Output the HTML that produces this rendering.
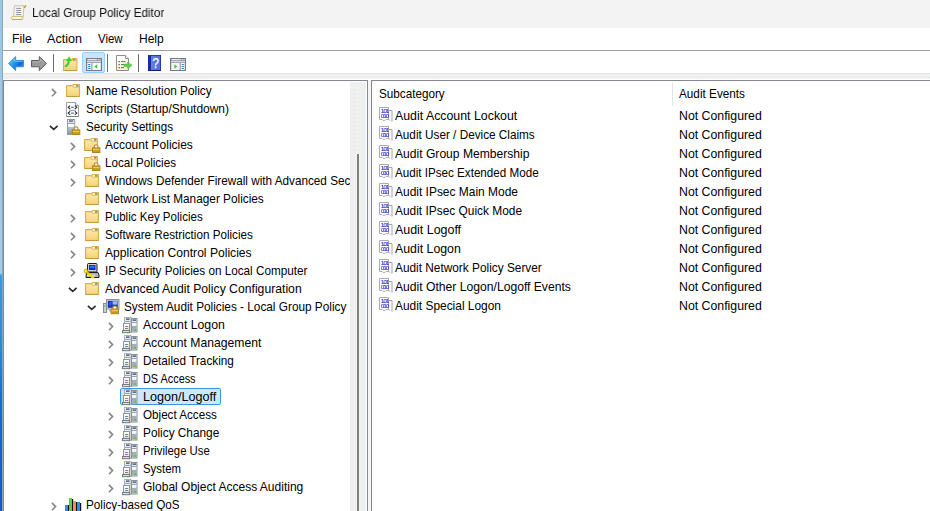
<!DOCTYPE html>
<html lang="en"><head><meta charset="utf-8"><title>Local Group Policy Editor</title>
<style>
html,body{margin:0;padding:0}
body{width:930px;height:511px;overflow:hidden;background:#fff;position:relative;
 font-family:"Liberation Sans",sans-serif;font-size:12.4px;color:#000}
.ic{position:absolute;overflow:visible}
.t{position:absolute;white-space:nowrap;line-height:18px;height:18px;transform-origin:0 50%}
.tt{color:#111;will-change:transform}
.clip{position:absolute;height:18px;overflow:hidden}
.edge{position:absolute;left:0;top:0;width:4px;height:511px;
 background:linear-gradient(to right,rgba(0,0,0,0) 0,rgba(0,0,0,0) 2px,#8aa6ba 2px,#8aa6ba 3px,#fff 3px),
 linear-gradient(to bottom,#9ec6e3 0,#a2cbe6 273px,#6cbcf0 274px,#2f9fe2 276px,#2a8cde 340px,#1e68d8 400px,#1c54cc 511px);}
.titlebar{position:absolute;left:3px;top:0;width:927px;height:28px;background:#f3f3f3}
.menubar{position:absolute;left:3px;top:28px;width:927px;height:22px;background:#fff}
.menuline{position:absolute;left:3px;top:50px;width:927px;height:1px;background:#a0a0a0}
.sep{position:absolute;top:54px;width:1px;height:18px;background:#6d6d6d}
.tbsel{position:absolute;left:82px;top:52px;width:21px;height:19px;border:1px solid #98d1ff;background:#cce4f7;border-radius:2px}
.band{position:absolute;left:3px;top:73px;width:927px;height:6px;background:#f0f0f0 radial-gradient(circle at 0.5px 0.5px,#dde7eb 0.55px,rgba(221,231,235,0) 0.8px) 2px 3px/4px 8px;border-top:1px solid #e2e2e2;box-sizing:border-box}
.bandline{position:absolute;left:3px;top:80px;width:365px;height:1px;background:#828790}
.bandline2{position:absolute;left:371px;top:80px;width:559px;height:1px;background:#828790}
.gap{position:absolute;left:368px;top:80px;width:3px;height:431px;background:#f5f5f5}
.treeborder{position:absolute;left:3px;top:80px;width:1px;height:431px;background:#828790}
.treeright{position:absolute;left:367px;top:81px;width:1px;height:430px;background:#828790}
.listleft{position:absolute;left:371px;top:81px;width:1px;height:430px;background:#828790}
.sbtrack{position:absolute;left:350px;top:82px;width:16px;height:429px;background-color:#f0f0f0;background-image:radial-gradient(circle at 0.5px 0.5px,#dde7eb 0.55px,rgba(221,231,235,0) 0.8px),radial-gradient(circle at 0.5px 0.5px,#dde7eb 0.55px,rgba(221,231,235,0) 0.8px);background-size:4px 8px,4px 8px;background-position:0 3px,1px 7px}
.sbthumb{position:absolute;left:357px;top:154px;width:2px;height:357px;background:#808080;box-shadow:0 0 0 1px rgba(255,255,255,.35)}
.selbox{position:absolute;width:99px;height:15px;border:1px solid #3a96e6;background:#cce8ff;border-radius:2px}
.colsep{position:absolute;left:672px;top:82px;width:1px;height:24px;background:#e2e5e9}
</style></head>
<body>
<svg width="0" height="0" style="position:absolute;left:0;top:0"><defs><linearGradient id="gb" x1="0" y1="0" x2="1" y2="0.6"><stop offset="0" stop-color="#5fb8f2"/><stop offset=".45" stop-color="#2f9cea"/><stop offset=".8" stop-color="#0a6ade"/><stop offset="1" stop-color="#2a8ee6"/></linearGradient><linearGradient id="ug" x1="0" y1="0" x2="0" y2="1"><stop offset="0" stop-color="#fbe6a2"/><stop offset="1" stop-color="#f3d27c"/></linearGradient><linearGradient id="eg" x1="0" y1="0" x2="0" y2="1"><stop offset="0" stop-color="#ffffff"/><stop offset="1" stop-color="#fcefc0"/></linearGradient><linearGradient id="fg" x1="0" y1="0" x2="0" y2="1"><stop offset="0" stop-color="#fce9a6"/><stop offset="1" stop-color="#f4d27a"/></linearGradient><linearGradient id="sg" x1="0" y1="0" x2="0" y2="1"><stop offset="0" stop-color="#b9c4cf"/><stop offset="1" stop-color="#8796a6"/></linearGradient><linearGradient id="dg" x1="0" y1="0" x2="0" y2="1"><stop offset="0" stop-color="#ffffff"/><stop offset="1" stop-color="#fbe59a"/></linearGradient></defs></svg>
<div class="edge"></div>
<div class="titlebar"></div>
<svg class="ic" style="left:10.5px;top:4.5px" width="16" height="16" viewBox="0 0 16 16" ><path d="M3.4 0.8h9.6l-0.9 11H2.6z" fill="#fdf7dc" stroke="#b4b4b8" stroke-width=".8"/><path d="M13.2 2.8L15 0.6" stroke="#c89a20" stroke-width="1.6"/><path d="M5.2 3.4h5M5.2 5.5h5M5.2 7.5h5M5.2 9.6h5" stroke="#8c90a4" stroke-width="1"/><rect x="0.4" y="11.4" width="11.6" height="3" rx="1.5" fill="#fff6d0" stroke="#d2b050" stroke-width=".8"/><rect x="1.6" y="12.3" width="7.6" height="1" fill="#fff"/><path d="M1 14.6h10.4" stroke="#8c94a4" stroke-width=".6"/></svg>
<div class="menubar"></div>
<div class="menuline"></div>
<svg class="ic" style="left:8px;top:56px" width="16" height="15" viewBox="0 0 16 15" ><path d="M0.5 7.5L7.7 0.6V4.5H15.5V10.8H7.7V14.5z" fill="url(#gb)" stroke="#2a90e2" stroke-width=".9"/><path d="M2.2 7.5L6.8 3V5.5H14.5" fill="none" stroke="#8fd0f8" stroke-width=".8" opacity=".8"/></svg>
<svg class="ic" style="left:31px;top:56px" width="16" height="15" viewBox="0 0 16 15" ><path d="M15.5 7.5L8.3 0.6V4.5H0.5V10.8H8.3V14.5z" fill="#9a9a9a" stroke="#5c5c5c" stroke-width="1"/><path d="M1.5 5.6H9.2V3L13.6 7.3" fill="none" stroke="#b8b8b8" stroke-width=".8"/></svg>
<div class="sep" style="left:53px"></div>
<svg class="ic" style="left:63px;top:56px" width="15" height="15" viewBox="0 0 15 15" ><path d="M0.5 3.5H8.5L9.2 2.5H14V14.5H0.5z" fill="#efca6a" stroke="#d8b054"/><rect x="9.8" y="3.2" width="2.6" height="1.1" fill="#3f8fe6"/><path d="M1.3 4.6H8.6L9.6 5.6H13.2V13.8H1.3z" fill="url(#ug)"/><path d="M0.5 14.5H14" stroke="#c29a40"/><path d="M2.6 10.2C5 9.2 5.6 7 5.9 4.6" fill="none" stroke="#3fcf3a" stroke-width="2.2" stroke-linecap="round"/><path d="M3 4.9L6.2 0.3L9 4.9z" fill="#3fcf3a"/></svg>
<div class="tbsel"></div>
<svg class="ic" style="left:86px;top:58px" width="16" height="13" viewBox="0 0 16 13" ><rect x="0.5" y="0.5" width="15" height="12" fill="#9096a6" stroke="#757b8c"/><rect x="1.5" y="1.2" width="9.3" height="1" fill="#fff"/><rect x="11.8" y="1.2" width="1" height="1" fill="#fff"/><rect x="13.6" y="1.2" width="1" height="1" fill="#fff"/><rect x="1" y="3.2" width="14" height="1" fill="#e8eaf2"/><rect x="1.3" y="5" width="4" height="7" fill="#fff"/><path d="M2.2 6.5h2.2M2.2 8.5h2.2M2.2 10.5h2.2" stroke="#2a7fd4" stroke-width="1"/><rect x="6.4" y="5" width="8.3" height="7" fill="#fff"/><path d="M11.3 6.3v4.4L8.3 8.5z" fill="#46c23c"/></svg>
<div class="sep" style="left:107px"></div>
<svg class="ic" style="left:116px;top:55px" width="17" height="16" viewBox="0 0 17 16" ><path d="M0.5 0.5H9.5l3 3V15.5H0.5z" fill="url(#eg)" stroke="#8e8e8e"/><path d="M9.5 0.5v3h3" fill="#fff" stroke="#8e8e8e"/><rect x="2.6" y="6.1" width="1.1" height="1.1" fill="#222"/><rect x="2.6" y="9.1" width="1.1" height="1.1" fill="#222"/><rect x="2.6" y="12.1" width="1.1" height="1.1" fill="#223"/><path d="M5 6.6h4.5M5 9.6h3M5 12.6h3" stroke="#5a6c94" stroke-width="1"/><path d="M8 9.1h3.6V6.9L16 10.3L11.6 13.7V11.5H8z" fill="#58d048" stroke="#3cb830" stroke-width=".5"/></svg>
<div class="sep" style="left:138px"></div>
<svg class="ic" style="left:148px;top:55px" width="13" height="16" viewBox="0 0 13 16" ><rect x="0" y="0" width="13" height="16" fill="#1a2ca4"/><rect x="3" y="0.8" width="9.2" height="14.2" fill="#5872dc"/><rect x="3" y="0.8" width="3" height="14.2" fill="#6a84e4" opacity=".6"/><rect x="0" y="15" width="13" height="1" fill="#141e70"/><text x="7.6" y="13.2" text-anchor="middle" font-family="Liberation Sans, sans-serif" font-size="14.5" fill="#fff" stroke="#fff" stroke-width=".3" textLength="6.4" lengthAdjust="spacingAndGlyphs">?</text></svg>
<svg class="ic" style="left:170px;top:58px" width="16" height="13" viewBox="0 0 16 13" ><rect x="0.5" y="0.5" width="15" height="12" fill="#9096a6" stroke="#757b8c"/><rect x="1.5" y="1.2" width="9.3" height="1" fill="#fff"/><rect x="11.8" y="1.2" width="1" height="1" fill="#fff"/><rect x="13.6" y="1.2" width="1" height="1" fill="#fff"/><rect x="1" y="3.2" width="14" height="1" fill="#e8eaf2"/><rect x="10.8" y="5" width="3.9" height="7" fill="#fff"/><path d="M11.7 6.5h2.2M11.7 8.5h2.2M11.7 10.5h2.2" stroke="#2a7fd4" stroke-width="1"/><rect x="1.3" y="5" width="8.4" height="7" fill="#f6f6f6"/><path d="M4.4 6.3v4.4L7.4 8.5z" fill="#46c23c"/></svg>
<div class="band"></div>
<div class="bandline"></div><div class="bandline2"></div><div class="gap"></div>
<div class="treeborder"></div>
<div class="sbtrack"></div><div class="sbthumb"></div>
<div class="treeright"></div>
<div class="listleft"></div>
<svg class="ic" style="left:50.8px;top:87.8px" width="7" height="10" viewBox="0 0 7 10" ><path d="M0.9 0.9L4.6 4.6L0.9 8.3" fill="none" stroke="#878787" stroke-width="1.6"/></svg>
<svg class="ic" style="left:66px;top:84px" width="14" height="13" viewBox="0 0 14 13" ><path d="M0.5 1.5H6.3L7 0.5H13.5V12.5H0.5z" fill="#eec766" stroke="#d8ae4e"/><rect x="7.8" y="1.2" width="2.2" height="1.3" fill="#fff"/><rect x="10" y="1.2" width="2.2" height="1.3" fill="#3f8fe6"/><path d="M1.3 2.6H6L7.2 4H12.7V11.8H1.3z" fill="url(#fg)"/><path d="M0.5 12.5H13.5" stroke="#c29a40"/></svg>
<svg class="ic" style="left:66px;top:102px" width="13" height="15" viewBox="0 0 13 15" ><path d="M0.5 0.5H9.5l3 3V14.5H0.5z" fill="#fff" stroke="#a0a0a0"/><path d="M0.5 14.5H12.5" stroke="#7c7c7c"/><path d="M9.5 0.5v3h3" fill="#f0f0f0" stroke="#a0a0a0"/><path d="M4.2 3.6L2.2 5.3L4.2 7M8.8 3.6L10.8 5.3L8.8 7" fill="none" stroke="#2c2c2c" stroke-width="1.1"/><path d="M5 5.3h3" stroke="#5a6c8c" stroke-width="1.1"/><path d="M4.2 9.4L2.2 11.1L4.2 12.8M8.8 9.4L10.8 11.1L8.8 12.8" fill="none" stroke="#2c2c2c" stroke-width="1.1"/><path d="M5 11.1h3" stroke="#5a6c8c" stroke-width="1.1"/><path d="M3.2 8.3h6.6" stroke="#7f93b4" stroke-width=".9"/></svg>
<svg class="ic" style="left:48.7px;top:124.7px" width="10" height="7" viewBox="0 0 10 7" ><path d="M0.9 0.8L4.75 4.4L8.6 0.8" fill="none" stroke="#2a2a2a" stroke-width="1.6"/></svg>
<svg class="ic" style="left:67px;top:118.5px" width="14" height="16" viewBox="0 0 14 16" ><rect x="0.5" y="0.5" width="7.2" height="15" fill="#eef1f4" stroke="#8f99a3"/><rect x="2" y="1.5" width="4.2" height="1.1" fill="#2c3640"/><rect x="1" y="3" width="6.2" height="1" fill="#dfe6ee"/><path d="M0.5 4.5h7.2" stroke="#9aa4ae"/><rect x="1" y="5.2" width="6.2" height="2" fill="#f8fafc"/><rect x="0.8" y="8" width="6.6" height="7.2" fill="url(#sg)"/><g transform="translate(4.9,7)"><path d="M2.3 4.2V2.7a1.9 1.9 0 0 1 3.8 0V4.2" fill="#fff" stroke="#c0922a" stroke-width="1.2"/><rect x="0.5" y="3.9" width="7.4" height="4.6" fill="#d9a630" stroke="#b08420"/><rect x="1" y="5.1" width="6.4" height="0.8" fill="#f0cf70"/><rect x="1" y="6.7" width="6.4" height="0.7" fill="#b88a22"/></g></svg>
<svg class="ic" style="left:69.8px;top:141.8px" width="7" height="10" viewBox="0 0 7 10" ><path d="M0.9 0.9L4.6 4.6L0.9 8.3" fill="none" stroke="#878787" stroke-width="1.6"/></svg>
<svg class="ic" style="left:84px;top:138px" width="17" height="15" viewBox="0 0 17 15" ><path d="M0.5 1.5H6.3L7 0.5H13.5V12.5H0.5z" fill="#eec766" stroke="#d8ae4e"/><rect x="7.8" y="1.2" width="2.2" height="1.3" fill="#fff"/><rect x="10" y="1.2" width="2.2" height="1.3" fill="#3f8fe6"/><path d="M1.3 2.6H6L7.2 4H12.7V11.8H1.3z" fill="url(#fg)"/><path d="M0.5 12.5H13.5" stroke="#c29a40"/><g transform="translate(8,6)"><path d="M2.3 4.2V2.7a1.9 1.9 0 0 1 3.8 0V4.2" fill="#fff" stroke="#c0922a" stroke-width="1.2"/><rect x="0.5" y="3.9" width="7.4" height="4.6" fill="#d9a630" stroke="#b08420"/><rect x="1" y="5.1" width="6.4" height="0.8" fill="#f0cf70"/><rect x="1" y="6.7" width="6.4" height="0.7" fill="#b88a22"/></g></svg>
<svg class="ic" style="left:69.8px;top:159.8px" width="7" height="10" viewBox="0 0 7 10" ><path d="M0.9 0.9L4.6 4.6L0.9 8.3" fill="none" stroke="#878787" stroke-width="1.6"/></svg>
<svg class="ic" style="left:84px;top:156px" width="17" height="15" viewBox="0 0 17 15" ><path d="M0.5 1.5H6.3L7 0.5H13.5V12.5H0.5z" fill="#eec766" stroke="#d8ae4e"/><rect x="7.8" y="1.2" width="2.2" height="1.3" fill="#fff"/><rect x="10" y="1.2" width="2.2" height="1.3" fill="#3f8fe6"/><path d="M1.3 2.6H6L7.2 4H12.7V11.8H1.3z" fill="url(#fg)"/><path d="M0.5 12.5H13.5" stroke="#c29a40"/><g transform="translate(8,6)"><path d="M2.3 4.2V2.7a1.9 1.9 0 0 1 3.8 0V4.2" fill="#fff" stroke="#c0922a" stroke-width="1.2"/><rect x="0.5" y="3.9" width="7.4" height="4.6" fill="#d9a630" stroke="#b08420"/><rect x="1" y="5.1" width="6.4" height="0.8" fill="#f0cf70"/><rect x="1" y="6.7" width="6.4" height="0.7" fill="#b88a22"/></g></svg>
<svg class="ic" style="left:69.8px;top:177.8px" width="7" height="10" viewBox="0 0 7 10" ><path d="M0.9 0.9L4.6 4.6L0.9 8.3" fill="none" stroke="#878787" stroke-width="1.6"/></svg>
<svg class="ic" style="left:85px;top:174px" width="14" height="13" viewBox="0 0 14 13" ><path d="M0.5 1.5H6.3L7 0.5H13.5V12.5H0.5z" fill="#eec766" stroke="#d8ae4e"/><rect x="7.8" y="1.2" width="2.2" height="1.3" fill="#fff"/><rect x="10" y="1.2" width="2.2" height="1.3" fill="#3f8fe6"/><path d="M1.3 2.6H6L7.2 4H12.7V11.8H1.3z" fill="url(#fg)"/><path d="M0.5 12.5H13.5" stroke="#c29a40"/></svg>
<svg class="ic" style="left:85px;top:192px" width="14" height="13" viewBox="0 0 14 13" ><path d="M0.5 1.5H6.3L7 0.5H13.5V12.5H0.5z" fill="#eec766" stroke="#d8ae4e"/><rect x="7.8" y="1.2" width="2.2" height="1.3" fill="#fff"/><rect x="10" y="1.2" width="2.2" height="1.3" fill="#3f8fe6"/><path d="M1.3 2.6H6L7.2 4H12.7V11.8H1.3z" fill="url(#fg)"/><path d="M0.5 12.5H13.5" stroke="#c29a40"/></svg>
<svg class="ic" style="left:69.8px;top:213.8px" width="7" height="10" viewBox="0 0 7 10" ><path d="M0.9 0.9L4.6 4.6L0.9 8.3" fill="none" stroke="#878787" stroke-width="1.6"/></svg>
<svg class="ic" style="left:85px;top:210px" width="14" height="13" viewBox="0 0 14 13" ><path d="M0.5 1.5H6.3L7 0.5H13.5V12.5H0.5z" fill="#eec766" stroke="#d8ae4e"/><rect x="7.8" y="1.2" width="2.2" height="1.3" fill="#fff"/><rect x="10" y="1.2" width="2.2" height="1.3" fill="#3f8fe6"/><path d="M1.3 2.6H6L7.2 4H12.7V11.8H1.3z" fill="url(#fg)"/><path d="M0.5 12.5H13.5" stroke="#c29a40"/></svg>
<svg class="ic" style="left:69.8px;top:231.8px" width="7" height="10" viewBox="0 0 7 10" ><path d="M0.9 0.9L4.6 4.6L0.9 8.3" fill="none" stroke="#878787" stroke-width="1.6"/></svg>
<svg class="ic" style="left:85px;top:228px" width="14" height="13" viewBox="0 0 14 13" ><path d="M0.5 1.5H6.3L7 0.5H13.5V12.5H0.5z" fill="#eec766" stroke="#d8ae4e"/><rect x="7.8" y="1.2" width="2.2" height="1.3" fill="#fff"/><rect x="10" y="1.2" width="2.2" height="1.3" fill="#3f8fe6"/><path d="M1.3 2.6H6L7.2 4H12.7V11.8H1.3z" fill="url(#fg)"/><path d="M0.5 12.5H13.5" stroke="#c29a40"/></svg>
<svg class="ic" style="left:69.8px;top:249.8px" width="7" height="10" viewBox="0 0 7 10" ><path d="M0.9 0.9L4.6 4.6L0.9 8.3" fill="none" stroke="#878787" stroke-width="1.6"/></svg>
<svg class="ic" style="left:85px;top:246px" width="14" height="13" viewBox="0 0 14 13" ><path d="M0.5 1.5H6.3L7 0.5H13.5V12.5H0.5z" fill="#eec766" stroke="#d8ae4e"/><rect x="7.8" y="1.2" width="2.2" height="1.3" fill="#fff"/><rect x="10" y="1.2" width="2.2" height="1.3" fill="#3f8fe6"/><path d="M1.3 2.6H6L7.2 4H12.7V11.8H1.3z" fill="url(#fg)"/><path d="M0.5 12.5H13.5" stroke="#c29a40"/></svg>
<svg class="ic" style="left:69.8px;top:267.8px" width="7" height="10" viewBox="0 0 7 10" ><path d="M0.9 0.9L4.6 4.6L0.9 8.3" fill="none" stroke="#878787" stroke-width="1.6"/></svg>
<svg class="ic" style="left:84px;top:263px" width="16" height="16" viewBox="0 0 16 16" ><rect x="3.5" y="0.5" width="9.5" height="8.5" rx="1" fill="#cfcfcf" stroke="#1c1c1c"/><rect x="5" y="2" width="6.5" height="5" fill="#1030c8"/><rect x="6" y="3.4" width="4.5" height="1" fill="#5aa8ff"/><path d="M2.5 9.5H14L15 12V14.5H2z" fill="#b4b4b4" stroke="#1c1c1c"/><path d="M3 12.5h8" stroke="#e8e8e8"/><path d="M1.8 8.2L9.3 14.6" stroke="#f2da00" stroke-width="2.1" stroke-linecap="round"/><circle cx="1.9" cy="8" r="1.9" fill="#f8e020" stroke="#a88c00" stroke-width=".6"/><circle cx="1.7" cy="7.8" r=".6" fill="#fff8b0"/><path d="M5.8 13.4l1.5-1.3M7.3 14.6l1.2-1.1" stroke="#f2da00" stroke-width="1.2"/></svg>
<svg class="ic" style="left:67.7px;top:286.7px" width="10" height="7" viewBox="0 0 10 7" ><path d="M0.9 0.8L4.75 4.4L8.6 0.8" fill="none" stroke="#2a2a2a" stroke-width="1.6"/></svg>
<svg class="ic" style="left:85px;top:282px" width="14" height="13" viewBox="0 0 14 13" ><path d="M0.5 1.5H6.3L7 0.5H13.5V12.5H0.5z" fill="#eec766" stroke="#d8ae4e"/><rect x="7.8" y="1.2" width="2.2" height="1.3" fill="#fff"/><rect x="10" y="1.2" width="2.2" height="1.3" fill="#3f8fe6"/><path d="M1.3 2.6H6L7.2 4H12.7V11.8H1.3z" fill="url(#fg)"/><path d="M0.5 12.5H13.5" stroke="#c29a40"/></svg>
<svg class="ic" style="left:86.7px;top:304.7px" width="10" height="7" viewBox="0 0 10 7" ><path d="M0.9 0.8L4.75 4.4L8.6 0.8" fill="none" stroke="#2a2a2a" stroke-width="1.6"/></svg>
<svg class="ic" style="left:103px;top:299px" width="17" height="16" viewBox="0 0 17 16" ><rect x="0.5" y="4.5" width="3" height="9" fill="#c8ced4" stroke="#858d96"/><rect x="1.2" y="6.4" width="1.3" height="1.3" fill="#30c838"/><rect x="3.5" y="0.5" width="12.5" height="9.5" fill="#d4d8dc" stroke="#8a9299"/><rect x="4.8" y="1.8" width="10" height="7" fill="#1c34c0"/><rect x="9.6" y="2.2" width="4.8" height="3.4" fill="#a8c8f4" opacity=".9"/><rect x="6.5" y="3" width="2" height="3" fill="#3a5ce0"/><rect x="6" y="10.5" width="4" height="2" fill="#b0b8c0"/><g transform="translate(7.6,6.2)"><path d="M2.3 4.2V2.7a1.9 1.9 0 0 1 3.8 0V4.2" fill="#fff" stroke="#c0922a" stroke-width="1.2"/><rect x="0.5" y="3.9" width="7.4" height="4.6" fill="#d9a630" stroke="#b08420"/><rect x="1" y="5.1" width="6.4" height="0.8" fill="#f0cf70"/><rect x="1" y="6.7" width="6.4" height="0.7" fill="#b88a22"/></g></svg>
<svg class="ic" style="left:107.8px;top:321.8px" width="7" height="10" viewBox="0 0 7 10" ><path d="M0.9 0.9L4.6 4.6L0.9 8.3" fill="none" stroke="#878787" stroke-width="1.6"/></svg>
<svg class="ic" style="left:122px;top:317px" width="15" height="16" viewBox="0 0 15 16" ><rect x="2.5" y="0.5" width="6.5" height="15" fill="#eef2f6" stroke="#a9b1b9"/><rect x="4" y="1.5" width="3.6" height="1.2" fill="#2a3a50"/><path d="M3 4.5h5.5" stroke="#9aa4ae"/><rect x="3.2" y="3" width="5" height="1" fill="#dfe7ef"/><rect x="9.5" y="1.5" width="5.5" height="13.5" fill="#eaeef2" stroke="#87919b"/><rect x="10.5" y="2.5" width="3.6" height="1.2" fill="#2a3a50"/><path d="M10 5.5h4.5" stroke="#9aa4ae"/><rect x="10.2" y="6.3" width="4.1" height="1.7" fill="#fafcfe"/><rect x="10" y="9" width="4.5" height="5.5" fill="#a4aeb8"/><rect x="12.3" y="12" width="2" height="2" fill="#58d020"/><rect x="1.5" y="6.5" width="6" height="7.5" fill="url(#dg)" stroke="#8e959c"/><path d="M3 9.5h3.2M3 11.5h3.2" stroke="#7a86a0" stroke-width="1"/><rect x="0.5" y="13.5" width="7" height="2.2" fill="#f8e28e" stroke="#727a82"/></svg>
<svg class="ic" style="left:107.8px;top:339.8px" width="7" height="10" viewBox="0 0 7 10" ><path d="M0.9 0.9L4.6 4.6L0.9 8.3" fill="none" stroke="#878787" stroke-width="1.6"/></svg>
<svg class="ic" style="left:122px;top:335px" width="15" height="16" viewBox="0 0 15 16" ><rect x="2.5" y="0.5" width="6.5" height="15" fill="#eef2f6" stroke="#a9b1b9"/><rect x="4" y="1.5" width="3.6" height="1.2" fill="#2a3a50"/><path d="M3 4.5h5.5" stroke="#9aa4ae"/><rect x="3.2" y="3" width="5" height="1" fill="#dfe7ef"/><rect x="9.5" y="1.5" width="5.5" height="13.5" fill="#eaeef2" stroke="#87919b"/><rect x="10.5" y="2.5" width="3.6" height="1.2" fill="#2a3a50"/><path d="M10 5.5h4.5" stroke="#9aa4ae"/><rect x="10.2" y="6.3" width="4.1" height="1.7" fill="#fafcfe"/><rect x="10" y="9" width="4.5" height="5.5" fill="#a4aeb8"/><rect x="12.3" y="12" width="2" height="2" fill="#58d020"/><rect x="1.5" y="6.5" width="6" height="7.5" fill="url(#dg)" stroke="#8e959c"/><path d="M3 9.5h3.2M3 11.5h3.2" stroke="#7a86a0" stroke-width="1"/><rect x="0.5" y="13.5" width="7" height="2.2" fill="#f8e28e" stroke="#727a82"/></svg>
<svg class="ic" style="left:107.8px;top:357.8px" width="7" height="10" viewBox="0 0 7 10" ><path d="M0.9 0.9L4.6 4.6L0.9 8.3" fill="none" stroke="#878787" stroke-width="1.6"/></svg>
<svg class="ic" style="left:122px;top:353px" width="15" height="16" viewBox="0 0 15 16" ><rect x="2.5" y="0.5" width="6.5" height="15" fill="#eef2f6" stroke="#a9b1b9"/><rect x="4" y="1.5" width="3.6" height="1.2" fill="#2a3a50"/><path d="M3 4.5h5.5" stroke="#9aa4ae"/><rect x="3.2" y="3" width="5" height="1" fill="#dfe7ef"/><rect x="9.5" y="1.5" width="5.5" height="13.5" fill="#eaeef2" stroke="#87919b"/><rect x="10.5" y="2.5" width="3.6" height="1.2" fill="#2a3a50"/><path d="M10 5.5h4.5" stroke="#9aa4ae"/><rect x="10.2" y="6.3" width="4.1" height="1.7" fill="#fafcfe"/><rect x="10" y="9" width="4.5" height="5.5" fill="#a4aeb8"/><rect x="12.3" y="12" width="2" height="2" fill="#58d020"/><rect x="1.5" y="6.5" width="6" height="7.5" fill="url(#dg)" stroke="#8e959c"/><path d="M3 9.5h3.2M3 11.5h3.2" stroke="#7a86a0" stroke-width="1"/><rect x="0.5" y="13.5" width="7" height="2.2" fill="#f8e28e" stroke="#727a82"/></svg>
<svg class="ic" style="left:107.8px;top:375.8px" width="7" height="10" viewBox="0 0 7 10" ><path d="M0.9 0.9L4.6 4.6L0.9 8.3" fill="none" stroke="#878787" stroke-width="1.6"/></svg>
<svg class="ic" style="left:122px;top:371px" width="15" height="16" viewBox="0 0 15 16" ><rect x="2.5" y="0.5" width="6.5" height="15" fill="#eef2f6" stroke="#a9b1b9"/><rect x="4" y="1.5" width="3.6" height="1.2" fill="#2a3a50"/><path d="M3 4.5h5.5" stroke="#9aa4ae"/><rect x="3.2" y="3" width="5" height="1" fill="#dfe7ef"/><rect x="9.5" y="1.5" width="5.5" height="13.5" fill="#eaeef2" stroke="#87919b"/><rect x="10.5" y="2.5" width="3.6" height="1.2" fill="#2a3a50"/><path d="M10 5.5h4.5" stroke="#9aa4ae"/><rect x="10.2" y="6.3" width="4.1" height="1.7" fill="#fafcfe"/><rect x="10" y="9" width="4.5" height="5.5" fill="#a4aeb8"/><rect x="12.3" y="12" width="2" height="2" fill="#58d020"/><rect x="1.5" y="6.5" width="6" height="7.5" fill="url(#dg)" stroke="#8e959c"/><path d="M3 9.5h3.2M3 11.5h3.2" stroke="#7a86a0" stroke-width="1"/><rect x="0.5" y="13.5" width="7" height="2.2" fill="#f8e28e" stroke="#727a82"/></svg>
<div class="selbox" style="left:120px;top:388px"></div>
<svg class="ic" style="left:122px;top:389px" width="15" height="16" viewBox="0 0 15 16" ><rect x="2.5" y="0.5" width="6.5" height="15" fill="#eef2f6" stroke="#a9b1b9"/><rect x="4" y="1.5" width="3.6" height="1.2" fill="#2a3a50"/><path d="M3 4.5h5.5" stroke="#9aa4ae"/><rect x="3.2" y="3" width="5" height="1" fill="#dfe7ef"/><rect x="9.5" y="1.5" width="5.5" height="13.5" fill="#eaeef2" stroke="#87919b"/><rect x="10.5" y="2.5" width="3.6" height="1.2" fill="#2a3a50"/><path d="M10 5.5h4.5" stroke="#9aa4ae"/><rect x="10.2" y="6.3" width="4.1" height="1.7" fill="#fafcfe"/><rect x="10" y="9" width="4.5" height="5.5" fill="#a4aeb8"/><rect x="12.3" y="12" width="2" height="2" fill="#58d020"/><rect x="1.5" y="6.5" width="6" height="7.5" fill="url(#dg)" stroke="#8e959c"/><path d="M3 9.5h3.2M3 11.5h3.2" stroke="#7a86a0" stroke-width="1"/><rect x="0.5" y="13.5" width="7" height="2.2" fill="#f8e28e" stroke="#727a82"/></svg>
<svg class="ic" style="left:107.8px;top:411.8px" width="7" height="10" viewBox="0 0 7 10" ><path d="M0.9 0.9L4.6 4.6L0.9 8.3" fill="none" stroke="#878787" stroke-width="1.6"/></svg>
<svg class="ic" style="left:122px;top:407px" width="15" height="16" viewBox="0 0 15 16" ><rect x="2.5" y="0.5" width="6.5" height="15" fill="#eef2f6" stroke="#a9b1b9"/><rect x="4" y="1.5" width="3.6" height="1.2" fill="#2a3a50"/><path d="M3 4.5h5.5" stroke="#9aa4ae"/><rect x="3.2" y="3" width="5" height="1" fill="#dfe7ef"/><rect x="9.5" y="1.5" width="5.5" height="13.5" fill="#eaeef2" stroke="#87919b"/><rect x="10.5" y="2.5" width="3.6" height="1.2" fill="#2a3a50"/><path d="M10 5.5h4.5" stroke="#9aa4ae"/><rect x="10.2" y="6.3" width="4.1" height="1.7" fill="#fafcfe"/><rect x="10" y="9" width="4.5" height="5.5" fill="#a4aeb8"/><rect x="12.3" y="12" width="2" height="2" fill="#58d020"/><rect x="1.5" y="6.5" width="6" height="7.5" fill="url(#dg)" stroke="#8e959c"/><path d="M3 9.5h3.2M3 11.5h3.2" stroke="#7a86a0" stroke-width="1"/><rect x="0.5" y="13.5" width="7" height="2.2" fill="#f8e28e" stroke="#727a82"/></svg>
<svg class="ic" style="left:107.8px;top:429.8px" width="7" height="10" viewBox="0 0 7 10" ><path d="M0.9 0.9L4.6 4.6L0.9 8.3" fill="none" stroke="#878787" stroke-width="1.6"/></svg>
<svg class="ic" style="left:122px;top:425px" width="15" height="16" viewBox="0 0 15 16" ><rect x="2.5" y="0.5" width="6.5" height="15" fill="#eef2f6" stroke="#a9b1b9"/><rect x="4" y="1.5" width="3.6" height="1.2" fill="#2a3a50"/><path d="M3 4.5h5.5" stroke="#9aa4ae"/><rect x="3.2" y="3" width="5" height="1" fill="#dfe7ef"/><rect x="9.5" y="1.5" width="5.5" height="13.5" fill="#eaeef2" stroke="#87919b"/><rect x="10.5" y="2.5" width="3.6" height="1.2" fill="#2a3a50"/><path d="M10 5.5h4.5" stroke="#9aa4ae"/><rect x="10.2" y="6.3" width="4.1" height="1.7" fill="#fafcfe"/><rect x="10" y="9" width="4.5" height="5.5" fill="#a4aeb8"/><rect x="12.3" y="12" width="2" height="2" fill="#58d020"/><rect x="1.5" y="6.5" width="6" height="7.5" fill="url(#dg)" stroke="#8e959c"/><path d="M3 9.5h3.2M3 11.5h3.2" stroke="#7a86a0" stroke-width="1"/><rect x="0.5" y="13.5" width="7" height="2.2" fill="#f8e28e" stroke="#727a82"/></svg>
<svg class="ic" style="left:107.8px;top:447.8px" width="7" height="10" viewBox="0 0 7 10" ><path d="M0.9 0.9L4.6 4.6L0.9 8.3" fill="none" stroke="#878787" stroke-width="1.6"/></svg>
<svg class="ic" style="left:122px;top:443px" width="15" height="16" viewBox="0 0 15 16" ><rect x="2.5" y="0.5" width="6.5" height="15" fill="#eef2f6" stroke="#a9b1b9"/><rect x="4" y="1.5" width="3.6" height="1.2" fill="#2a3a50"/><path d="M3 4.5h5.5" stroke="#9aa4ae"/><rect x="3.2" y="3" width="5" height="1" fill="#dfe7ef"/><rect x="9.5" y="1.5" width="5.5" height="13.5" fill="#eaeef2" stroke="#87919b"/><rect x="10.5" y="2.5" width="3.6" height="1.2" fill="#2a3a50"/><path d="M10 5.5h4.5" stroke="#9aa4ae"/><rect x="10.2" y="6.3" width="4.1" height="1.7" fill="#fafcfe"/><rect x="10" y="9" width="4.5" height="5.5" fill="#a4aeb8"/><rect x="12.3" y="12" width="2" height="2" fill="#58d020"/><rect x="1.5" y="6.5" width="6" height="7.5" fill="url(#dg)" stroke="#8e959c"/><path d="M3 9.5h3.2M3 11.5h3.2" stroke="#7a86a0" stroke-width="1"/><rect x="0.5" y="13.5" width="7" height="2.2" fill="#f8e28e" stroke="#727a82"/></svg>
<svg class="ic" style="left:107.8px;top:465.8px" width="7" height="10" viewBox="0 0 7 10" ><path d="M0.9 0.9L4.6 4.6L0.9 8.3" fill="none" stroke="#878787" stroke-width="1.6"/></svg>
<svg class="ic" style="left:122px;top:461px" width="15" height="16" viewBox="0 0 15 16" ><rect x="2.5" y="0.5" width="6.5" height="15" fill="#eef2f6" stroke="#a9b1b9"/><rect x="4" y="1.5" width="3.6" height="1.2" fill="#2a3a50"/><path d="M3 4.5h5.5" stroke="#9aa4ae"/><rect x="3.2" y="3" width="5" height="1" fill="#dfe7ef"/><rect x="9.5" y="1.5" width="5.5" height="13.5" fill="#eaeef2" stroke="#87919b"/><rect x="10.5" y="2.5" width="3.6" height="1.2" fill="#2a3a50"/><path d="M10 5.5h4.5" stroke="#9aa4ae"/><rect x="10.2" y="6.3" width="4.1" height="1.7" fill="#fafcfe"/><rect x="10" y="9" width="4.5" height="5.5" fill="#a4aeb8"/><rect x="12.3" y="12" width="2" height="2" fill="#58d020"/><rect x="1.5" y="6.5" width="6" height="7.5" fill="url(#dg)" stroke="#8e959c"/><path d="M3 9.5h3.2M3 11.5h3.2" stroke="#7a86a0" stroke-width="1"/><rect x="0.5" y="13.5" width="7" height="2.2" fill="#f8e28e" stroke="#727a82"/></svg>
<svg class="ic" style="left:107.8px;top:483.8px" width="7" height="10" viewBox="0 0 7 10" ><path d="M0.9 0.9L4.6 4.6L0.9 8.3" fill="none" stroke="#878787" stroke-width="1.6"/></svg>
<svg class="ic" style="left:122px;top:479px" width="15" height="16" viewBox="0 0 15 16" ><rect x="2.5" y="0.5" width="6.5" height="15" fill="#eef2f6" stroke="#a9b1b9"/><rect x="4" y="1.5" width="3.6" height="1.2" fill="#2a3a50"/><path d="M3 4.5h5.5" stroke="#9aa4ae"/><rect x="3.2" y="3" width="5" height="1" fill="#dfe7ef"/><rect x="9.5" y="1.5" width="5.5" height="13.5" fill="#eaeef2" stroke="#87919b"/><rect x="10.5" y="2.5" width="3.6" height="1.2" fill="#2a3a50"/><path d="M10 5.5h4.5" stroke="#9aa4ae"/><rect x="10.2" y="6.3" width="4.1" height="1.7" fill="#fafcfe"/><rect x="10" y="9" width="4.5" height="5.5" fill="#a4aeb8"/><rect x="12.3" y="12" width="2" height="2" fill="#58d020"/><rect x="1.5" y="6.5" width="6" height="7.5" fill="url(#dg)" stroke="#8e959c"/><path d="M3 9.5h3.2M3 11.5h3.2" stroke="#7a86a0" stroke-width="1"/><rect x="0.5" y="13.5" width="7" height="2.2" fill="#f8e28e" stroke="#727a82"/></svg>
<svg class="ic" style="left:50.8px;top:501.8px" width="7" height="10" viewBox="0 0 7 10" ><path d="M0.9 0.9L4.6 4.6L0.9 8.3" fill="none" stroke="#878787" stroke-width="1.6"/></svg>
<svg class="ic" style="left:65px;top:498px" width="17" height="14" viewBox="0 0 17 14" ><rect x="0" y="7" width="3" height="7" fill="#2f8fe8"/><rect x="3" y="7" width="1.2" height="7" fill="#111"/><rect x="4" y="0" width="3" height="14" fill="#5ccf4a"/><rect x="7" y="1" width="1.2" height="13" fill="#111"/><rect x="8" y="3" width="3" height="11" fill="#ff8a5c"/><rect x="11" y="4" width="1.2" height="10" fill="#111"/><rect x="12" y="4" width="3" height="10" fill="#2f8fe8"/><rect x="15" y="5" width="1.2" height="9" fill="#111"/></svg>
<div class="colsep"></div>
<svg class="ic" style="left:379px;top:107px;will-change:transform" width="14" height="15" viewBox="0 0 14 15" ><path d="M9.5 3.5h3.5v11" fill="none" stroke="#a2a2a2"/><path d="M0.5 0.5h9v12h-2.4l-.8.8h-2.4l-.8-.8H0.5z" fill="#fff" stroke="#aaa"/><text y="6.1" x="1.9" font-family="Liberation Sans, sans-serif" font-size="5.9" fill="#3030c8" stroke="#3030c8" stroke-width=".15" letter-spacing="-0.66">101</text><text y="11.3" x="1.9" font-family="Liberation Sans, sans-serif" font-size="5.9" fill="#3030c8" stroke="#3030c8" stroke-width=".15" letter-spacing="-0.66">010</text><path d="M9.8 12.2l1.6 1.6" stroke="#999" stroke-width=".8"/></svg>
<svg class="ic" style="left:379px;top:126px;will-change:transform" width="14" height="15" viewBox="0 0 14 15" ><path d="M9.5 3.5h3.5v11" fill="none" stroke="#a2a2a2"/><path d="M0.5 0.5h9v12h-2.4l-.8.8h-2.4l-.8-.8H0.5z" fill="#fff" stroke="#aaa"/><text y="6.1" x="1.9" font-family="Liberation Sans, sans-serif" font-size="5.9" fill="#3030c8" stroke="#3030c8" stroke-width=".15" letter-spacing="-0.66">101</text><text y="11.3" x="1.9" font-family="Liberation Sans, sans-serif" font-size="5.9" fill="#3030c8" stroke="#3030c8" stroke-width=".15" letter-spacing="-0.66">010</text><path d="M9.8 12.2l1.6 1.6" stroke="#999" stroke-width=".8"/></svg>
<svg class="ic" style="left:379px;top:145px;will-change:transform" width="14" height="15" viewBox="0 0 14 15" ><path d="M9.5 3.5h3.5v11" fill="none" stroke="#a2a2a2"/><path d="M0.5 0.5h9v12h-2.4l-.8.8h-2.4l-.8-.8H0.5z" fill="#fff" stroke="#aaa"/><text y="6.1" x="1.9" font-family="Liberation Sans, sans-serif" font-size="5.9" fill="#3030c8" stroke="#3030c8" stroke-width=".15" letter-spacing="-0.66">101</text><text y="11.3" x="1.9" font-family="Liberation Sans, sans-serif" font-size="5.9" fill="#3030c8" stroke="#3030c8" stroke-width=".15" letter-spacing="-0.66">010</text><path d="M9.8 12.2l1.6 1.6" stroke="#999" stroke-width=".8"/></svg>
<svg class="ic" style="left:379px;top:164px;will-change:transform" width="14" height="15" viewBox="0 0 14 15" ><path d="M9.5 3.5h3.5v11" fill="none" stroke="#a2a2a2"/><path d="M0.5 0.5h9v12h-2.4l-.8.8h-2.4l-.8-.8H0.5z" fill="#fff" stroke="#aaa"/><text y="6.1" x="1.9" font-family="Liberation Sans, sans-serif" font-size="5.9" fill="#3030c8" stroke="#3030c8" stroke-width=".15" letter-spacing="-0.66">101</text><text y="11.3" x="1.9" font-family="Liberation Sans, sans-serif" font-size="5.9" fill="#3030c8" stroke="#3030c8" stroke-width=".15" letter-spacing="-0.66">010</text><path d="M9.8 12.2l1.6 1.6" stroke="#999" stroke-width=".8"/></svg>
<svg class="ic" style="left:379px;top:183px;will-change:transform" width="14" height="15" viewBox="0 0 14 15" ><path d="M9.5 3.5h3.5v11" fill="none" stroke="#a2a2a2"/><path d="M0.5 0.5h9v12h-2.4l-.8.8h-2.4l-.8-.8H0.5z" fill="#fff" stroke="#aaa"/><text y="6.1" x="1.9" font-family="Liberation Sans, sans-serif" font-size="5.9" fill="#3030c8" stroke="#3030c8" stroke-width=".15" letter-spacing="-0.66">101</text><text y="11.3" x="1.9" font-family="Liberation Sans, sans-serif" font-size="5.9" fill="#3030c8" stroke="#3030c8" stroke-width=".15" letter-spacing="-0.66">010</text><path d="M9.8 12.2l1.6 1.6" stroke="#999" stroke-width=".8"/></svg>
<svg class="ic" style="left:379px;top:202px;will-change:transform" width="14" height="15" viewBox="0 0 14 15" ><path d="M9.5 3.5h3.5v11" fill="none" stroke="#a2a2a2"/><path d="M0.5 0.5h9v12h-2.4l-.8.8h-2.4l-.8-.8H0.5z" fill="#fff" stroke="#aaa"/><text y="6.1" x="1.9" font-family="Liberation Sans, sans-serif" font-size="5.9" fill="#3030c8" stroke="#3030c8" stroke-width=".15" letter-spacing="-0.66">101</text><text y="11.3" x="1.9" font-family="Liberation Sans, sans-serif" font-size="5.9" fill="#3030c8" stroke="#3030c8" stroke-width=".15" letter-spacing="-0.66">010</text><path d="M9.8 12.2l1.6 1.6" stroke="#999" stroke-width=".8"/></svg>
<svg class="ic" style="left:379px;top:221px;will-change:transform" width="14" height="15" viewBox="0 0 14 15" ><path d="M9.5 3.5h3.5v11" fill="none" stroke="#a2a2a2"/><path d="M0.5 0.5h9v12h-2.4l-.8.8h-2.4l-.8-.8H0.5z" fill="#fff" stroke="#aaa"/><text y="6.1" x="1.9" font-family="Liberation Sans, sans-serif" font-size="5.9" fill="#3030c8" stroke="#3030c8" stroke-width=".15" letter-spacing="-0.66">101</text><text y="11.3" x="1.9" font-family="Liberation Sans, sans-serif" font-size="5.9" fill="#3030c8" stroke="#3030c8" stroke-width=".15" letter-spacing="-0.66">010</text><path d="M9.8 12.2l1.6 1.6" stroke="#999" stroke-width=".8"/></svg>
<svg class="ic" style="left:379px;top:240px;will-change:transform" width="14" height="15" viewBox="0 0 14 15" ><path d="M9.5 3.5h3.5v11" fill="none" stroke="#a2a2a2"/><path d="M0.5 0.5h9v12h-2.4l-.8.8h-2.4l-.8-.8H0.5z" fill="#fff" stroke="#aaa"/><text y="6.1" x="1.9" font-family="Liberation Sans, sans-serif" font-size="5.9" fill="#3030c8" stroke="#3030c8" stroke-width=".15" letter-spacing="-0.66">101</text><text y="11.3" x="1.9" font-family="Liberation Sans, sans-serif" font-size="5.9" fill="#3030c8" stroke="#3030c8" stroke-width=".15" letter-spacing="-0.66">010</text><path d="M9.8 12.2l1.6 1.6" stroke="#999" stroke-width=".8"/></svg>
<svg class="ic" style="left:379px;top:259px;will-change:transform" width="14" height="15" viewBox="0 0 14 15" ><path d="M9.5 3.5h3.5v11" fill="none" stroke="#a2a2a2"/><path d="M0.5 0.5h9v12h-2.4l-.8.8h-2.4l-.8-.8H0.5z" fill="#fff" stroke="#aaa"/><text y="6.1" x="1.9" font-family="Liberation Sans, sans-serif" font-size="5.9" fill="#3030c8" stroke="#3030c8" stroke-width=".15" letter-spacing="-0.66">101</text><text y="11.3" x="1.9" font-family="Liberation Sans, sans-serif" font-size="5.9" fill="#3030c8" stroke="#3030c8" stroke-width=".15" letter-spacing="-0.66">010</text><path d="M9.8 12.2l1.6 1.6" stroke="#999" stroke-width=".8"/></svg>
<svg class="ic" style="left:379px;top:278px;will-change:transform" width="14" height="15" viewBox="0 0 14 15" ><path d="M9.5 3.5h3.5v11" fill="none" stroke="#a2a2a2"/><path d="M0.5 0.5h9v12h-2.4l-.8.8h-2.4l-.8-.8H0.5z" fill="#fff" stroke="#aaa"/><text y="6.1" x="1.9" font-family="Liberation Sans, sans-serif" font-size="5.9" fill="#3030c8" stroke="#3030c8" stroke-width=".15" letter-spacing="-0.66">101</text><text y="11.3" x="1.9" font-family="Liberation Sans, sans-serif" font-size="5.9" fill="#3030c8" stroke="#3030c8" stroke-width=".15" letter-spacing="-0.66">010</text><path d="M9.8 12.2l1.6 1.6" stroke="#999" stroke-width=".8"/></svg>
<svg class="ic" style="left:379px;top:297px;will-change:transform" width="14" height="15" viewBox="0 0 14 15" ><path d="M9.5 3.5h3.5v11" fill="none" stroke="#a2a2a2"/><path d="M0.5 0.5h9v12h-2.4l-.8.8h-2.4l-.8-.8H0.5z" fill="#fff" stroke="#aaa"/><text y="6.1" x="1.9" font-family="Liberation Sans, sans-serif" font-size="5.9" fill="#3030c8" stroke="#3030c8" stroke-width=".15" letter-spacing="-0.66">101</text><text y="11.3" x="1.9" font-family="Liberation Sans, sans-serif" font-size="5.9" fill="#3030c8" stroke="#3030c8" stroke-width=".15" letter-spacing="-0.66">010</text><path d="M9.8 12.2l1.6 1.6" stroke="#999" stroke-width=".8"/></svg>
<span class="t tt" style="left:31.9px;top:3.7px;transform:scaleX(0.9462)">Local Group Policy Editor</span>
<span class="t" style="left:12.0px;top:29.7px;transform:scaleX(0.9857)">File</span>
<span class="t" style="left:47.3px;top:29.7px;transform:scaleX(1.015)">Action</span>
<span class="t" style="left:98.0px;top:29.7px;transform:scaleX(0.9217)">View</span>
<span class="t" style="left:138.8px;top:29.7px;transform:scaleX(0.9704)">Help</span>
<span class="t" style="left:85.8px;top:81.7px;transform:scaleX(0.9556)">Name Resolution Policy</span>
<span class="t" style="left:85.8px;top:99.7px;transform:scaleX(0.9657)">Scripts (Startup/Shutdown)</span>
<span class="t" style="left:85.8px;top:117.7px;transform:scaleX(0.9366)">Security Settings</span>
<span class="t" style="left:104.8px;top:135.7px;transform:scaleX(0.9664)">Account Policies</span>
<span class="t" style="left:104.8px;top:153.7px;transform:scaleX(0.9364)">Local Policies</span>
<div class="clip" style="left:0;top:171.7px;width:350px"><span class="t" style="left:104.8px;top:0;transform:scaleX(0.9477)">Windows Defender Firewall with Advanced Security</span></div>
<span class="t" style="left:104.8px;top:189.7px;transform:scaleX(0.9527)">Network List Manager Policies</span>
<span class="t" style="left:104.8px;top:207.7px;transform:scaleX(0.9337)">Public Key Policies</span>
<span class="t" style="left:104.8px;top:225.7px;transform:scaleX(0.9417)">Software Restriction Policies</span>
<span class="t" style="left:104.8px;top:243.7px;transform:scaleX(0.9764)">Application Control Policies</span>
<span class="t" style="left:104.8px;top:261.7px;transform:scaleX(0.9463)">IP Security Policies on Local Computer</span>
<span class="t" style="left:104.8px;top:279.7px;transform:scaleX(0.9847)">Advanced Audit Policy Configuration</span>
<span class="t" style="left:123.8px;top:297.7px;transform:scaleX(0.9523)">System Audit Policies - Local Group Policy</span>
<span class="t" style="left:142.8px;top:315.7px;transform:scaleX(0.9899)">Account Logon</span>
<span class="t" style="left:142.8px;top:333.7px;transform:scaleX(0.9826)">Account Management</span>
<span class="t" style="left:142.8px;top:351.7px;transform:scaleX(0.9487)">Detailed Tracking</span>
<span class="t" style="left:142.8px;top:369.7px;transform:scaleX(0.8771)">DS Access</span>
<span class="t" style="left:142.8px;top:387.7px;transform:scaleX(1.0164)">Logon/Logoff</span>
<span class="t" style="left:142.8px;top:405.7px;transform:scaleX(0.9405)">Object Access</span>
<span class="t" style="left:142.8px;top:423.7px;transform:scaleX(0.9542)">Policy Change</span>
<span class="t" style="left:142.8px;top:441.7px;transform:scaleX(0.9139)">Privilege Use</span>
<span class="t" style="left:142.8px;top:459.7px;transform:scaleX(0.9204)">System</span>
<span class="t" style="left:142.8px;top:477.7px;transform:scaleX(0.9696)">Global Object Access Auditing</span>
<span class="t" style="left:85.8px;top:495.7px;transform:scaleX(0.9428)">Policy-based QoS</span>
<span class="t" style="left:379.0px;top:84.7px;transform:scaleX(0.9445)">Subcategory</span>
<span class="t" style="left:679.1px;top:84.7px;transform:scaleX(0.9482)">Audit Events</span>
<span class="t" style="left:395.1px;top:106.7px;transform:scaleX(0.997)">Audit Account Lockout</span>
<span class="t" style="left:679.0px;top:106.7px;transform:scaleX(0.9937)">Not Configured</span>
<span class="t" style="left:395.1px;top:125.7px;transform:scaleX(0.9482)">Audit User / Device Claims</span>
<span class="t" style="left:679.0px;top:125.7px;transform:scaleX(0.9937)">Not Configured</span>
<span class="t" style="left:395.1px;top:144.7px;transform:scaleX(0.9764)">Audit Group Membership</span>
<span class="t" style="left:679.0px;top:144.7px;transform:scaleX(0.9937)">Not Configured</span>
<span class="t" style="left:395.1px;top:163.7px;transform:scaleX(0.9391)">Audit IPsec Extended Mode</span>
<span class="t" style="left:679.0px;top:163.7px;transform:scaleX(0.9937)">Not Configured</span>
<span class="t" style="left:395.1px;top:182.7px;transform:scaleX(0.9653)">Audit IPsec Main Mode</span>
<span class="t" style="left:679.0px;top:182.7px;transform:scaleX(0.9937)">Not Configured</span>
<span class="t" style="left:395.1px;top:201.7px;transform:scaleX(0.9611)">Audit IPsec Quick Mode</span>
<span class="t" style="left:679.0px;top:201.7px;transform:scaleX(0.9937)">Not Configured</span>
<span class="t" style="left:395.1px;top:220.7px;transform:scaleX(1.0025)">Audit Logoff</span>
<span class="t" style="left:679.0px;top:220.7px;transform:scaleX(0.9937)">Not Configured</span>
<span class="t" style="left:395.1px;top:239.7px;transform:scaleX(0.9955)">Audit Logon</span>
<span class="t" style="left:679.0px;top:239.7px;transform:scaleX(0.9937)">Not Configured</span>
<span class="t" style="left:395.1px;top:258.7px;transform:scaleX(0.956)">Audit Network Policy Server</span>
<span class="t" style="left:679.0px;top:258.7px;transform:scaleX(0.9937)">Not Configured</span>
<span class="t" style="left:395.1px;top:277.7px;transform:scaleX(0.9795)">Audit Other Logon/Logoff Events</span>
<span class="t" style="left:679.0px;top:277.7px;transform:scaleX(0.9937)">Not Configured</span>
<span class="t" style="left:395.1px;top:296.7px;transform:scaleX(0.9614)">Audit Special Logon</span>
<span class="t" style="left:679.0px;top:296.7px;transform:scaleX(0.9937)">Not Configured</span>
</body></html>
